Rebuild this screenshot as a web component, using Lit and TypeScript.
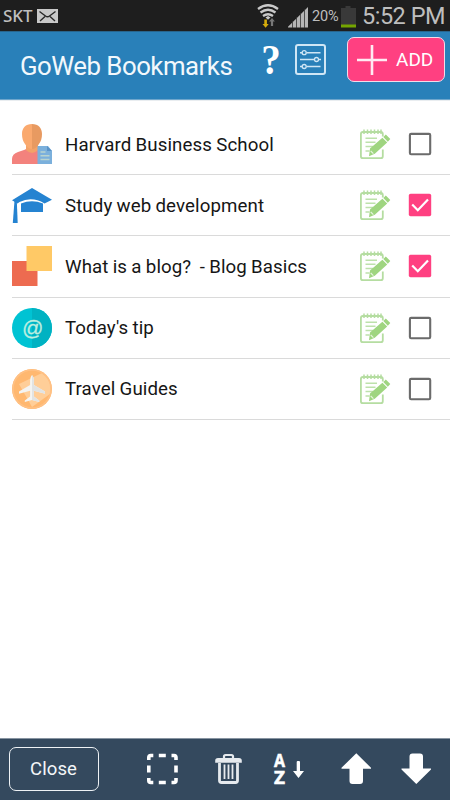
import { LitElement, html, css, svg } from "lit";
import { customElement, property } from "lit/decorators.js";

const art: Record<string, unknown> = {
  person: svg`
    <path d="M0 40V35q0-5 6-7l6-2q3-1 3-4h10q0 3 3 4l7 3q5 2 5 6v5z" fill="#f3827d"/>
    <path d="M14 20h12v6q-3 3-6 3t-6-3z" fill="#f3a268"/>
    <path d="M20 0C13.500 0 10 4 10 10q0 6 3 10 3 5 7 5z" fill="#faa96e"/>
    <path d="M20 0c6.500 0 10 4 10 10q0 6-3 10-3 5-7 5z" fill="#e89a61"/>
    <path d="M25.500 22H36l4 5v13H25.500z" fill="#7bb0dc"/><path d="M35 22v5h5z" fill="#5a94c8"/>
    <path d="M28.500 28h5M28.500 31.700h9M28.500 35.500h9" stroke="#b9d3cf" stroke-width="1.500"/>`,
  cap: svg`
    <path d="M20 3 40 14.800 32.500 18.500Q20 11 7.500 17L5.500 18.500 0 15.200z" fill="#2583d1"/>
    <path d="M9 18.500q11-4.500 22 0V27H9z" fill="#2583d1"/>
    <path d="M2.500 15.500h2.300L5.700 38H.8z" fill="#2583d1"/>`,
  squares: svg`<path d="M0 15h25.500v25H0z" fill="#ed6b50"/><path d="M14.500 0H40v25H14.500z" fill="#ffc966"/>`,
  at: svg`
    <circle cx="20" cy="20" r="20" fill="#00c3d3"/><path d="M20 0a20 20 0 0 1 0 40z" fill="#00b2c2"/>
    <text x="20.500" y="26.500" text-anchor="middle" font-family="Liberation Sans, sans-serif" font-style="italic" font-size="21" fill="#bdeee0" stroke="#bdeee0" stroke-width=".3">@</text>`,
  plane: svg`
    <circle cx="20" cy="20" r="20" fill="#ffb870"/><path d="M7 15 30 4q11 8 8 21L20 38z" fill="#ffce98"/>
    <circle cx="20" cy="20" r="19" fill="none" stroke="#ffc185" stroke-width="1.500"/>
    <path d="M20 6q1.900 2 1.900 5v5L33 22.500v2.300L21.900 21.800v5.700l5.300 4v1.500L20 31l-7.200 2v-1.500l5.300-4v-5.700L7 24.800v-2.300L18.100 16v-5q0-3 1.900-5z" fill="#f4f4f2"/>
    <path d="M20 6q1.900 2 1.900 5v5L33 22.500v2.300L21.900 21.800v5.700l5.300 4v1.500L20 31z" fill="#e2e3e2"/>`,
};

@customElement("bookmark-row")
export class BookmarkRow extends LitElement {
  @property() icon = "";
  @property() label = "";
  @property({ type: Boolean }) checked = false;

  static styles = css`
    :host { display: flex; align-items: center; height: 61.200px; box-sizing: border-box; margin-left: 12px; border-bottom: 1px solid #dadada; }
    .icon { width: 40px; height: 40px; margin-left: .4px; flex: none; }
    .label { flex: 1; margin-left: 12.600px; padding-top: 1px; white-space: pre; font-size: 18.700px; line-height: 24px; letter-spacing: .09px; word-spacing: -.5px; color: #161616; }
    .edit { width: 32px; height: 32px; flex: none; margin-right: 17px; }
    .check { width: 24px; height: 24px; flex: none; margin-right: 18px; }
  `;

  render() {
    return html`
      <svg class="icon" viewBox="0 0 40 40">${art[this.icon]}</svg>
      <span class="label">${this.label}</span>
      <svg class="edit" viewBox="0 0 32 32" fill="none">
        <path d="M23.800 8.500V6Q23.800 4 21.800 4H3.900Q1.900 4 1.900 6V28.200q0 2 2 2H21.800q2 0 2-2V21.500" stroke="#b5dda1" stroke-width="1.800"/>
        <path d="M5 1.500V6M8.500 1.500V6M12 1.500V6M15.500 1.500V6M19 1.500V6M22 1.500V6" stroke="#b5dda1" stroke-width="1.500"/>
        <path d="M6.500 10.200H18M6.500 14.200h10M6.500 18.500h7.500M6.500 23h4" stroke="#bde1ab" stroke-width="1.500"/>
        <path d="m24.300 9 2.500-2.500 4.500 4.500-2.500 2.700zM11 20.500l12.400-10.800 4.800 4.800L15.800 25.700l-5.800 2.500z" fill="#9fd580"/>
        <path d="m11.700 23 2.700 2.700" stroke="#e8f6e0" stroke-width="1.100"/>
      </svg>
      <svg class="check" viewBox="0 0 24 24" fill="none">
        ${this.checked
          ? svg`<rect x=".8" y=".8" width="22.400" height="22.400" rx="1.800" fill="#ff4081"/><path d="m4.200 11.500 5.600 5.700L20 6.500" stroke="#fff" stroke-width="2.200"/>`
          : svg`<rect x="1.900" y="1.900" width="20.300" height="20.300" rx="1.200" stroke="#6b6b6b" stroke-width="2.100"/>`}
      </svg>`;
  }
}

@customElement("app-root")
export class AppRoot extends LitElement {
  static styles = css`
    :host { display: flex; flex-direction: column; width: 450px; height: 800px; background: #fff; font-family: Roboto, "Liberation Sans", sans-serif; overflow: hidden; }
    svg { display: block; flex: none; }
    .status { height: 31px; background: #1e1e1e; color: #bebebe; display: flex; align-items: center; flex: none; }
    .carrier { font-family: "Noto Sans", sans-serif; font-size: 17px; font-weight: 500; width: 37px; padding: 1px 0 0 3px; box-sizing: border-box; line-height: 30px; }
    .signals { margin-left: 198px; }
    .pct { width: 28px; margin-left: 2px; font-size: 14.500px; line-height: 31px; white-space: nowrap; padding-top: 2px; letter-spacing: -.2px; }
    .battery { margin-left: 0; }
    .time { margin-left: 5px; font-size: 23.500px; letter-spacing: -.5px; line-height: 31px; white-space: nowrap; padding-top: 1px; }
    .header { height: 69px; box-sizing: border-box; background: #2980b9; border-top: 1px solid #28658d; display: flex; flex: none; border-bottom: 1px solid #6fa6cc; }
    .title { width: 236px; margin: 16px 0 0 20px; font-size: 25.800px; line-height: 36px; font-weight: 400; letter-spacing: -.5px; white-space: nowrap; color: #f2f8fc; }
    .help { margin-top: 4px; }
    .tune { margin: 11px 0 0 8px; }
    .add { display: flex; align-items: center; box-sizing: border-box; width: 98px; height: 45px; margin: 5px 0 0 21px; padding: 0 0 0 8px; border: 1.500px solid #f3dbe9; border-radius: 7px; background: #ff4081; color: #fff; font: 19px Roboto, sans-serif; }
    .add span { margin-left: 8px; }
    .list { flex: 1; padding-top: 13px; border-top: 1px solid #e9edf0; box-sizing: border-box; }
    .footer { height: 62.500px; flex: none; background: #34495e; border-top: 1px solid #8794a1; box-sizing: border-box; display: flex; align-items: center; }
    .close { width: 90px; height: 44px; margin: 0 0 1px 8.500px; border: 1.500px solid #eef2f5; border-radius: 7px; background: transparent; color: #f3f6f8; padding: 0; font: 18.500px Roboto, sans-serif; box-sizing: border-box; letter-spacing: .1px; }
    .tools { margin-left: 41.500px; }
  `;

  render() {
    return html`
      <div class="status">
        <span class="carrier">SKT</span>
        <svg width="21" height="31" viewBox="37 0 21 31"><path d="M37 9h21v14H37z" fill="#c8c8c8"/><path d="m39.500 11.500 6 4.500q2 1.500 4 0l6-4.500M40 21l5-4.500M55 21l-5-4.500" fill="none" stroke="#282828" stroke-width="1.400"/></svg>
        <svg class="signals" width="54" height="31" viewBox="256 0 54 31" fill="none">
          <path d="M258 9q10-7.500 20 0M260.500 12.500q7.500-5.500 15 0M263 16q5-3.500 10 0" stroke="#c9c9c9" stroke-width="2.300"/>
          <path d="m265.500 17.500 2.500-1.500 2.500 1.500-2.500 2.300z" fill="#c9c9c9"/>
          <path d="M264.300 19.500h2.600V24h1.800l-3.100 3.700-3.100-3.700h1.800z" fill="#d5ac0c"/><path d="M270.900 26h2.200v-4.500h1.800L272 18l-2.900 3.500h1.800z" fill="#777"/>
          <path d="M288 27.500v-.8L308 7v20.500z" fill="#b6b6b6"/><path d="M292.500 21v7M296.500 17v11M300.500 13v15M304.500 9v19" stroke="#333" stroke-width=".8"/>
        </svg>
        <span class="pct">20%</span>
        <svg class="battery" width="17" height="31" viewBox="341 0 17 31"><path d="M342 27V8h4.500V6h5v2h5.500v19z" fill="#393939"/><path d="M342 24.500h15v3h-15z" fill="#74a500"/></svg>
        <span class="time">5:52 PM</span>
      </div>
      <div class="header">
        <div class="title">GoWeb Bookmarks</div>
        <svg class="help" width="30" height="54" viewBox="256 36 30 54"><text x="271" y="74" text-anchor="middle" font-family="Liberation Serif, serif" font-weight="700" font-size="43" textLength="19.500" lengthAdjust="spacingAndGlyphs" fill="#fff">?</text></svg>
        <svg class="tune" width="32" height="34" viewBox="295 43 32 34" fill="none" stroke="#d0e6f5">
          <rect x="297" y="45" width="29" height="29" rx="2" stroke-width="2"/>
          <path d="M301 52.700h2M307.500 52.700h14M301 59.500h14M320 59.500h2M301 66.500h2M307.500 66.500h14" stroke-width="1.500"/>
          <circle cx="305.200" cy="52.700" r="2" stroke-width="1.300"/><circle cx="317.500" cy="59.500" r="2" stroke-width="1.300"/><circle cx="305.200" cy="66.500" r="2" stroke-width="1.300"/>
        </svg>
        <button class="add"><svg width="32" height="32"><path d="M1 16h30M16 1v30" stroke="#ffeaf2" stroke-width="2.600"/></svg><span>ADD</span></button>
      </div>
      <div class="list">
        <bookmark-row icon="person" label="Harvard Business School"></bookmark-row>
        <bookmark-row icon="cap" label="Study web development" checked></bookmark-row>
        <bookmark-row icon="squares" label="What is a blog?  - Blog Basics" checked></bookmark-row>
        <bookmark-row icon="at" label="Today's tip"></bookmark-row>
        <bookmark-row icon="plane" label="Travel Guides"></bookmark-row>
      </div>
      <div class="footer">
        <button class="close">Close</button>
        <svg class="tools" width="310" height="60" viewBox="140 739 310 60" fill="#fff">
          <path d="M148.800 760v-2.500q0-2 2-2h2.500M158.800 755.500h7M171.500 755.500h2.500q2 0 2 2v2.500M176 765.500v7M176 778v2.500q0 2-2 2h-2.500M165.800 782.500h-7M153.300 782.500h-2.500q-2 0-2-2V778M148.800 772.500v-7" fill="none" stroke="#fff" stroke-width="3.600"/>
          <g fill="none" stroke="#e6eaee"><path d="M224 758.500v-2q0-1.500 1.500-1.500h6q1.500 0 1.500 1.500v2" stroke-width="2.200"/><path d="M216.500 761.500v-1q0-1.300 1.500-1.300h21q1.500 0 1.500 1.300v1z" stroke-width="2.600"/><path d="M219.500 763v17.500q0 2 2 2h14q2 0 2-2V763" stroke-width="2.800"/><path d="M224.500 764.500V779M228.500 764.500V779M232.500 764.500V779" stroke-width="1.800"/></g>
          <text x="279.500" y="766.500" text-anchor="middle" font-family="Open Sans, sans-serif" font-weight="700" font-size="17.500" textLength="11" lengthAdjust="spacingAndGlyphs" stroke="#fff" stroke-width=".5">A</text>
          <text x="279.500" y="784" text-anchor="middle" font-family="Open Sans, sans-serif" font-weight="700" font-size="17.500" textLength="11" lengthAdjust="spacingAndGlyphs" stroke="#fff" stroke-width=".5">Z</text>
          <path d="M296.700 762q0-1 1-1h1.300q1 0 1 1v9h4l-5.500 7-5.500-7h3.700z"/>
          <path d="m356.300 753.300 14.700 14.500v.9h-8V781q0 3-3 3h-7.500q-3 0-3-3v-12.300h-8v-.9z"/>
          <path d="m416.300 784-14.800-14.600v-.8h8V756.500q0-3 3-3h7.500q3 0 3 3v12.100h8v.8z"/>
        </svg>
      </div>`;
  }
}
